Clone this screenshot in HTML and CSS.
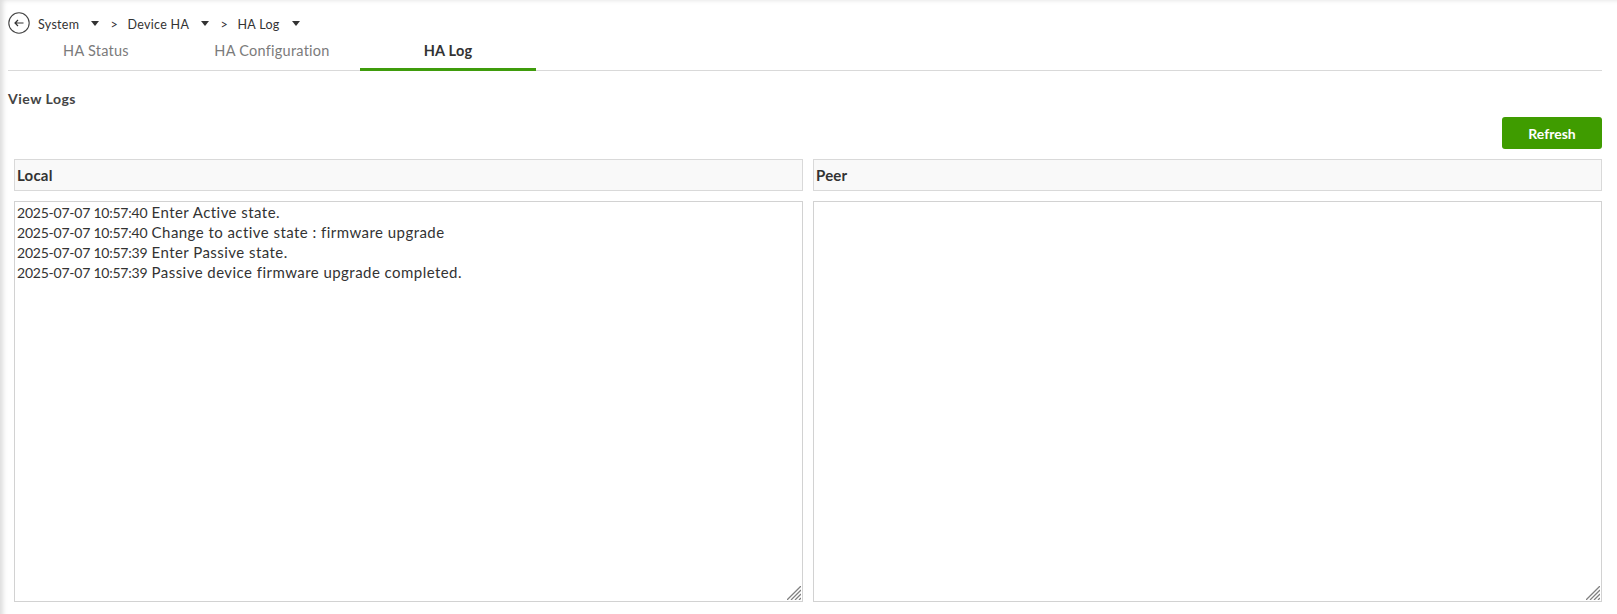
FILE: index.html
```html
<!DOCTYPE html>
<html lang="en">
<head>
<meta charset="utf-8">
<title>HA Log</title>
<link rel="stylesheet" href="styles.css">
</head>
<body>
<div class="page">
  <nav class="crumbs">
    <svg class="back" viewBox="0 0 22 22" width="22" height="22" aria-hidden="true">
      <circle cx="11" cy="11" r="10.2" fill="none" stroke="#444" stroke-width="1.1"/>
      <path d="M15.5 11H7M10 8l-3 3 3 3" fill="none" stroke="#333" stroke-width="1.2"/>
    </svg>
    <span class="crumb c1">System</span><i class="caret"></i>
    <span class="sep">&gt;</span>
    <span class="crumb c2">Device HA</span><i class="caret"></i>
    <span class="sep">&gt;</span>
    <span class="crumb c3">HA Log</span><i class="caret"></i>
  </nav>
  <div class="tabs">
    <a class="tab">HA Status</a>
    <a class="tab">HA Configuration</a>
    <a class="tab active">HA Log</a>
  </div>
  <h2 class="title">View Logs</h2>
  <div class="actions"><button class="refresh">Refresh</button></div>
  <div class="panels">
    <section class="panel">
      <div class="panel-head">Local</div>
      <div class="log">
        <div class="line"><span class="ts">2025-07-07 10:57:40</span> Enter Active state.</div>
        <div class="line"><span class="ts">2025-07-07 10:57:40</span> Change to active state : firmware upgrade</div>
        <div class="line"><span class="ts">2025-07-07 10:57:39</span> Enter Passive state.</div>
        <div class="line"><span class="ts">2025-07-07 10:57:39</span> Passive device firmware upgrade completed.</div>
        <svg class="grip" viewBox="0 0 14 14" width="14" height="14" aria-hidden="true"><path d="M0 14L14 0M4 14L14 4M8 14l6-6M12 14l2-2"/></svg>
      </div>
    </section>
    <section class="panel">
      <div class="panel-head">Peer</div>
      <div class="log">
        <svg class="grip" viewBox="0 0 14 14" width="14" height="14" aria-hidden="true"><path d="M0 14L14 0M4 14L14 4M8 14l6-6M12 14l2-2"/></svg>
      </div>
    </section>
  </div>
</div>
</body>
</html>
```
FILE: styles.css
```css
* { box-sizing: border-box; }
html, body { margin: 0; height: 100%; background: #fff; overflow: hidden; }
body { font-family: "Lato", "Open Sans", sans-serif; color: #333; }
.page {
  height: 614px;
  padding: 12px 15px 0 8px;
  box-shadow: inset 6px 3px 5px -3px #ddd;
}
.crumbs { display: flex; align-items: center; height: 22px; font-size: 12.5px; letter-spacing: .3px; color: #333; }
.back { flex: none; margin-right: 8px; }
.crumb, .sep { display: block; padding-top: 2px; }
.c1 { width: 52.5px; }
.c2 { width: 73px; }
.c3 { width: 54.5px; }
.caret { display: block; flex: none; width: 0; height: 0; margin-right: 12px; border: 4.5px solid transparent; border-top: 5px solid #333; border-bottom: 0; }
.sep { width: 17px; font-size: 12.5px; }
.tabs { display: flex; height: 37px; border-bottom: 1px solid #d9d9d9; }
.tab { width: 176px; text-align: center; padding-top: 8px; font-size: 14.5px; letter-spacing: .25px; color: #7b7b7b; height: 37px; }
.tab.active { color: #333; font-weight: 700; letter-spacing: .2px; border-bottom: 3px solid #3f9c0c; }
.title { margin: 20px 0 0; font-size: 14px; line-height: 16px; font-weight: 700; letter-spacing: .5px; color: #444; }
.actions { display: flex; justify-content: flex-end; margin-top: 10px; }
.refresh { width: 100px; height: 32px; border: 0; border-radius: 3px; background: #3f9c00; color: #fff; font: 700 14px "Lato", sans-serif; }
.panels { display: flex; gap: 10px; margin: 10px 0 0 6px; }
.panel { flex: 1 1 0; min-width: 0; display: flex; flex-direction: column; gap: 10px; }
.panel-head { height: 32px; padding-left: 2px; line-height: 30px; border: 1px solid #d9d9d9; background: #f9f9f9; font-size: 15px; font-weight: 700; letter-spacing: .2px; color: #333; }
.log { position: relative; width: 100%; height: 401px; padding: 0 2px; border: 1px solid #d2d2d2; font-size: 15px; line-height: 20px; letter-spacing: .45px; color: #333; background: #fff; }
.line { height: 20px; white-space: pre-wrap; }
.ts { font-size: 14px; letter-spacing: -.23px; }
.grip { position: absolute; right: 1px; bottom: 1px; }
.grip path { fill: none; stroke: #808080; stroke-width: 1.3; }
```
